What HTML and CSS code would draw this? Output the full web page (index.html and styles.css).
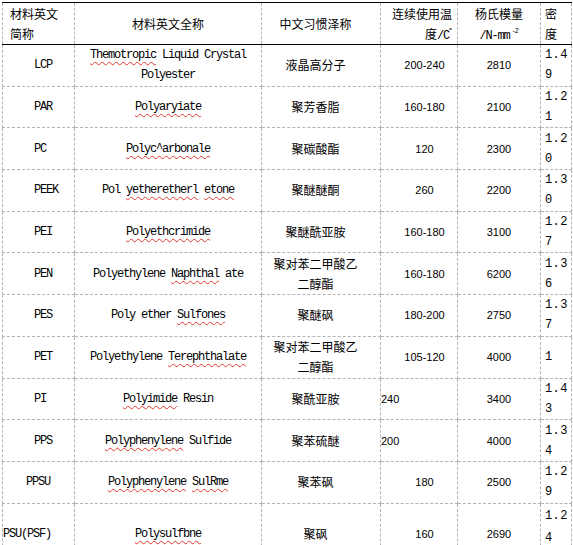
FILE: index.html
```html
<!DOCTYPE html>
<html lang="zh">
<head>
<meta charset="utf-8">
<title>材料表</title>
<link rel="stylesheet" href="styles.css">
</head>
<body>
<table class="grid">
  <colgroup>
    <col class="c1"><col class="c2"><col class="c3"><col class="c4"><col class="c5"><col class="c6">
  </colgroup>
  <thead>
    <tr class="head">
      <th class="h1">材料英文简称</th>
      <th class="h2">材料英文全称</th>
      <th class="h3">中文习惯泽称</th>
      <th class="h4">连续使用温度<span class="lat">/C</span><sup class="deg">°</sup></th>
      <th class="h5">杨氏模量<br><span class="lat">/N-mm<sup class="exp">-2</sup></span></th>
      <th class="h6">密<br>度</th>
    </tr>
  </thead>
  <tbody>
    <tr>
      <td class="abbr">LCP</td>
      <td class="full"><span class="sp">Themotropic</span> Liquid Crystal Polyester</td>
      <td class="cn">液晶高分子</td>
      <td class="temp">200-240</td>
      <td class="mod">2810</td>
      <td class="den">1.4<br>9</td>
    </tr>
    <tr>
      <td class="abbr">PAR</td>
      <td class="full"><span class="sp">Polyaryiate</span></td>
      <td class="cn">聚芳香脂</td>
      <td class="temp">160-180</td>
      <td class="mod">2100</td>
      <td class="den">1.2<br>1</td>
    </tr>
    <tr>
      <td class="abbr">PC</td>
      <td class="full"><span class="sp">Polyc^arbonale</span></td>
      <td class="cn">聚碳酸酯</td>
      <td class="temp">120</td>
      <td class="mod">2300</td>
      <td class="den">1.2<br>0</td>
    </tr>
    <tr>
      <td class="abbr">PEEK</td>
      <td class="full">Pol <span class="sp">yetheretherl</span> <span class="sp">etone</span></td>
      <td class="cn">聚醚醚酮</td>
      <td class="temp">260</td>
      <td class="mod">2200</td>
      <td class="den">1.3<br>0</td>
    </tr>
    <tr>
      <td class="abbr">PEI</td>
      <td class="full"><span class="sp">Polyethcrimide</span></td>
      <td class="cn">聚醚酰亚胺</td>
      <td class="temp">160-180</td>
      <td class="mod">3100</td>
      <td class="den">1.2<br>7</td>
    </tr>
    <tr>
      <td class="abbr">PEN</td>
      <td class="full">Polyethylene <span class="sp">Naphthal</span> ate</td>
      <td class="cn">聚对苯二甲酸乙二醇酯</td>
      <td class="temp">160-180</td>
      <td class="mod">6200</td>
      <td class="den">1.3<br>6</td>
    </tr>
    <tr>
      <td class="abbr">PES</td>
      <td class="full">Poly ether <span class="sp">Sulfones</span></td>
      <td class="cn">聚醚砜</td>
      <td class="temp">180-200</td>
      <td class="mod">2750</td>
      <td class="den">1.3<br>7</td>
    </tr>
    <tr>
      <td class="abbr">PET</td>
      <td class="full">Polyethylene <span class="sp">Terephthalate</span></td>
      <td class="cn">聚对苯二甲酸乙二醇酯</td>
      <td class="temp">105-120</td>
      <td class="mod">4000</td>
      <td class="den">1</td>
    </tr>
    <tr>
      <td class="abbr">PI</td>
      <td class="full"><span class="sp">Polyimide</span> Resin</td>
      <td class="cn">聚酰亚胺</td>
      <td class="temp left">240</td>
      <td class="mod">3400</td>
      <td class="den">1.4<br>3</td>
    </tr>
    <tr>
      <td class="abbr">PPS</td>
      <td class="full"><span class="sp">Polyphenylene</span> Sulfide</td>
      <td class="cn">聚苯硫醚</td>
      <td class="temp left">200</td>
      <td class="mod">4000</td>
      <td class="den">1.3<br>4</td>
    </tr>
    <tr>
      <td class="abbr abbr-mid">PPSU</td>
      <td class="full"><span class="sp">Polyphenylene</span> <span class="sp">SulRme</span></td>
      <td class="cn">聚苯砜</td>
      <td class="temp">180</td>
      <td class="mod">2500</td>
      <td class="den">1.2<br>9</td>
    </tr>
    <tr class="tall">
      <td class="abbr abbr-flush">PSU(PSF)</td>
      <td class="full"><span class="sp">Polysulfbne</span></td>
      <td class="cn">聚砜</td>
      <td class="temp">160</td>
      <td class="mod">2690</td>
      <td class="den den-top">1.2<br>4</td>
    </tr>
  </tbody>
</table>
</body>
</html>
```

FILE: styles.css
```css
html, body {
  margin: 0;
  padding: 0;
  overflow: hidden;
  background: #ffffff;
}

body {
  font-family: "Noto Sans CJK SC", "Liberation Sans", sans-serif;
  font-size: 12px;
  color: #000000;
}

.grid {
  border-collapse: collapse;
  table-layout: fixed;
  width: 569px;
  margin: 2px 0 0 2px;
  line-height: 20px;
}

.c1 { width: 72px; }
.c2 { width: 187px; }
.c3 { width: 119px; }
.c4 { width: 77px; }
.c5 { width: 83px; }
.c6 { width: 31px; }

th,
td {
  border: 1px dashed #b3b3b3;
  padding: 0;
  vertical-align: middle;
  font-weight: normal;
  overflow: hidden;
}

.head th {
  border-top: 1px solid #000000;
  border-bottom: 1px solid #000000;
  line-height: 20px;
}

.head { height: 42px; }
.grid tbody tr { height: 41.7px; }
.grid tbody tr.tall { height: 62px; }

.lat,
.abbr,
.full {
  font-family: "Liberation Mono", monospace;
  font-size: 12px;
  letter-spacing: -1.2px;
}

.lat { white-space: nowrap; line-height: 0; }

.h1 { text-align: left; padding: 0 6px 0 7px; }
.h2 { text-align: center; }
.h3 { text-align: center; padding: 0 19px 0 8px; }
.h4 { text-align: right; padding: 0 5px 0 5px; }
.h5 { text-align: center; padding: 0 4px; }
.h6 { text-align: left; padding: 0 0 0 4px; }

.deg {
  font-size: 8px;
  line-height: 0;
  vertical-align: 5px;
}

.exp {
  font-family: "Liberation Sans", sans-serif;
  font-size: 7px;
  letter-spacing: 0;
  line-height: 0;
  vertical-align: 6px;
  margin-left: 3px;
}

.abbr { text-align: left; padding-left: 31px; }
.abbr.abbr-mid { padding-left: 23px; }
.abbr.abbr-flush { padding-left: 0; }

.full { text-align: center; padding: 0 6px; }

.sp {
  text-decoration: underline wavy #e2372f;
  text-decoration-thickness: 1px;
  text-underline-offset: 3px;
}

.cn { text-align: center; padding: 0 19px 0 8px; }

.temp,
.mod {
  font-family: "Liberation Sans", sans-serif;
  font-size: 11px;
}

.temp { text-align: center; padding-left: 11px; }
.temp.left { text-align: left; padding-left: 0; }

.mod { text-align: center; }

.den {
  font-family: "Liberation Mono", monospace;
  font-size: 12px;
  line-height: 20px;
  text-align: left;
  padding-left: 4px;
  letter-spacing: 0.4px;
}

.den.den-top {
  vertical-align: top;
  padding-top: 1px;
  line-height: 22px;
}
```
